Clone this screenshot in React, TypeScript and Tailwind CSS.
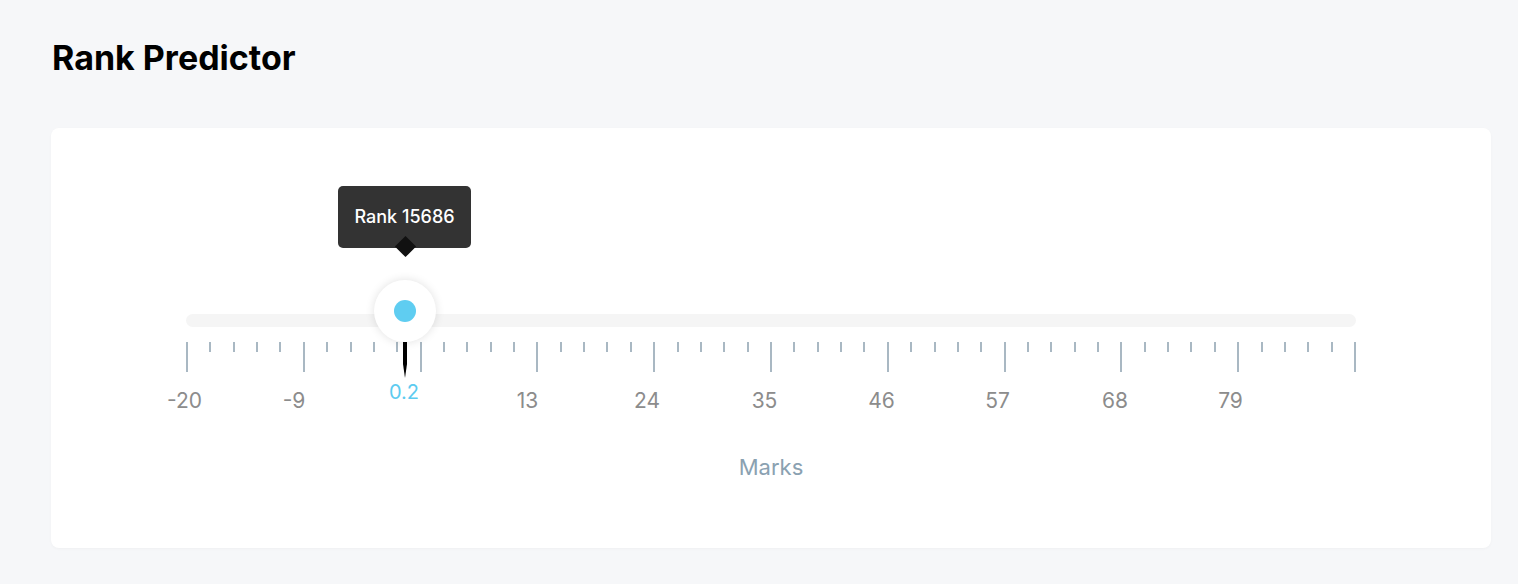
import React from 'react';

const TICKS = Array.from({ length: 51 }, (_, i) => i);

// mark labels, x measured from the left end of the track
const marks = [
    { label: '-20', x: -1.5 },
    { label: '-9', x: 108 },
    { label: '13', x: 341.5 },
    { label: '24', x: 461 },
    { label: '35', x: 578.5 },
    { label: '46', x: 695.5 },
    { label: '57', x: 811.5 },
    { label: '68', x: 929 },
    { label: '79', x: 1044.5 },
];

function Needle() {
    return (
        <svg width="4" height="36" viewBox="0 0 4 36" className="absolute left-[216.5px] top-[28px]">
            <path d="M0 0 H4 V22 L2 36 L0 22 Z" fill="#000" />
        </svg>
    );
}

function RankSlider() {
    return (
        <div className="relative">
            {/* track */}
            <div className="h-[13px] rounded-full bg-[#f5f5f5]" />

            {/* ticks */}
            <div className="mt-[15px] flex h-[30px] items-start justify-between">
                {TICKS.map((i) => (
                    <div
                        key={i}
                        className={i % 5 === 0 ? 'h-[30px] w-[2px] bg-[#a9b8c3]' : 'h-[10px] w-[2px] bg-[#a9b8c3]'}
                    />
                ))}
            </div>

            {/* mark labels */}
            <div className="relative mt-[16px] h-[26px] text-[21px] leading-[26px] text-[#8c8c8c]">
                {marks.map((m) => (
                    <span
                        key={m.label}
                        className="absolute top-0 -translate-x-1/2 whitespace-nowrap"
                        style={{ left: m.x }}
                    >
                        {m.label}
                    </span>
                ))}
            </div>

            <Needle />

            {/* current value */}
            <span className="absolute left-[218px] top-[66px] -translate-x-1/2 text-[20px] leading-[24px] text-[#5ccbf0]">
                0.2
            </span>

            {/* thumb */}
            <div className="absolute left-[188px] top-[-34px] flex h-[62px] w-[62px] items-center justify-center rounded-full bg-white shadow-[0_0_10px_rgba(0,0,0,0.12)]">
                <div className="h-[22px] w-[22px] rounded-full bg-[#5fcdf1]" />
            </div>

            {/* tooltip */}
            <div className="absolute left-[152px] top-[-128px] flex h-[62px] w-[133px] items-center justify-center rounded-[5px] bg-[#333333] pb-[2px] text-[18px] font-medium text-white">
                Rank 15686
            </div>
            <div className="absolute left-[211.5px] top-[-75.5px] h-[15px] w-[15px] rotate-45 bg-[#111111]" />
        </div>
    );
}

export default function App() {
    return (
        <div className="min-h-[584px] bg-[#f6f7f9] pl-[51px] pr-[27px] pt-[37px] font-['Inter',sans-serif]">
            <h1 className="pl-[1px] text-[34px] font-bold leading-[41px] text-black">Rank Predictor</h1>

            <div className="mt-[50px] h-[420px] rounded-lg bg-white px-[135px] pt-[186px] shadow-[0_1px_3px_rgba(0,0,0,0.03)]">
                <RankSlider />
                <p className="mt-[40px] text-center text-[22px] leading-[27px] text-[#8aa1b1]">Marks</p>
            </div>
        </div>
    );
}
